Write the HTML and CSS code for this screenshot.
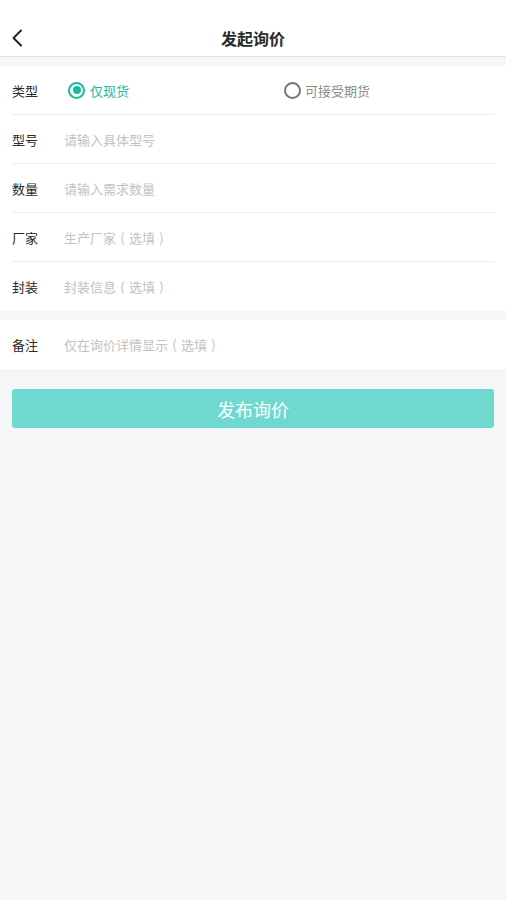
FILE: index.html
```html
<!DOCTYPE html>
<html lang="zh">
<head>
<meta charset="utf-8">
<link rel="stylesheet" href="styles.css">
</head>
<body>
<div class="page">
  <header class="nav">
    <span class="back">
      <svg width="12" height="18" viewBox="0 0 12 18"><path d="M10 1.5 L2.5 9 L10 16.5" fill="none" stroke="#222" stroke-width="2" stroke-linecap="round" stroke-linejoin="round"/></svg>
    </span>
    <h1 class="title">发起询价</h1>
  </header>
  <section class="card">
    <div class="row">
      <span class="label">类型</span>
      <div class="radios">
        <span class="radio on"><span class="dot"></span>仅现货</span>
        <span class="radio off"><span class="dot"></span>可接受期货</span>
      </div>
    </div>
    <div class="row"><span class="label">型号</span><span class="ph">请输入具体型号</span></div>
    <div class="row"><span class="label">数量</span><span class="ph">请输入需求数量</span></div>
    <div class="row"><span class="label">厂家</span><span class="ph">生产厂家<span class="paren">(</span>选填<span class="paren">)</span></span></div>
    <div class="row"><span class="label">封装</span><span class="ph">封装信息<span class="paren">(</span>选填<span class="paren">)</span></span></div>
  </section>
  <section class="card card2">
    <div class="row"><span class="label">备注</span><span class="ph">仅在询价详情显示<span class="paren">(</span>选填<span class="paren">)</span></span></div>
  </section>
  <div class="btnwrap"><button class="submit">发布询价</button></div>
</div>
</body>
</html>
```
FILE: styles.css
```css
* { box-sizing: border-box; }
html, body { margin: 0; padding: 0; }
body {
  background: #f5f6f8;
  font-family: "Noto Sans CJK SC", "Noto Sans", sans-serif;
  width: 506px;
  height: 900px;
}
.nav {
  height: 57px;
  background: #fff;
  border-bottom: 1px solid #e2e2e2;
  display: flex;
  align-items: flex-end;
  justify-content: center;
  position: relative;
  padding-bottom: 6px;
}
.back {
  position: absolute;
  left: 11px;
  bottom: 9px;
  display: flex;
}
.title {
  margin: 0;
  font-size: 16px;
  font-weight: 700;
  color: #2a2a2a;
  line-height: 24px;
}
.card {
  background: #fff;
  margin-top: 9px;
  padding: 0 12px;
}
.card2 { margin-top: 9px; }
.row {
  height: 49px;
  display: flex;
  align-items: center;
  border-bottom: 1px solid #ececec;
  font-size: 13px;
}
.card .row:last-child { border-bottom: none; }
.card2 .row { height: 49px; }
.label {
  width: 52px;
  color: #2a2a2a;
}
.ph { color: #c2c2c2; }
.paren {
  display: inline-block;
  width: 13px;
  text-align: center;
}
.radios { display: flex; align-items: center; }
.radio {
  display: flex;
  align-items: center;
}
.radio .dot {
  width: 17px;
  height: 17px;
  border-radius: 50%;
  margin-right: 5px;
  position: relative;
}
.radio.on { color: #17b9a1; width: 216px; margin-left: 4px; }
.radio.on .dot { border: 2px solid #17b9a1; }
.radio.on .dot::after {
  content: "";
  position: absolute;
  left: 2.5px; top: 2.5px;
  width: 8px; height: 8px;
  border-radius: 50%;
  background: #17b9a1;
}
.radio.off { color: #8a8a8a; }
.radio.off .dot { border: 2px solid #777; margin-right: 4px; }
.btnwrap { padding: 20px 12px 0; }
.submit {
  width: 100%;
  height: 39px;
  border: none;
  border-radius: 3px;
  background: #6fd9d0;
  color: #fff;
  font-family: "Noto Sans CJK SC", sans-serif;
  font-size: 18px;
  padding: 0;
}
```
